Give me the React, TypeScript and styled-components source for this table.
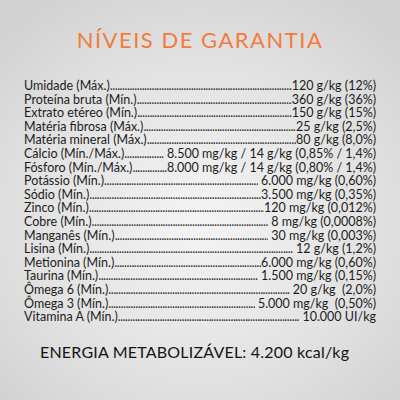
import React from 'react';
import styled, { createGlobalStyle } from 'styled-components';

const GlobalStyle = createGlobalStyle`
  html, body {
    margin: 0;
    padding: 0;
  }
  body {
    font-family: Lato, "Open Sans", sans-serif;
  }
`;

const Page = styled.div`
  width: 400px;
  height: 400px;
  box-sizing: border-box;
  padding: 25px 24px 0 24px;
  background: radial-gradient(ellipse 70% 65% at 50% 55%, #f4f4f4 0%, #e2e2e2 60%, #d2d2d2 100%);
  display: flex;
  flex-direction: column;
  overflow: hidden;
`;

const Title = styled.h1`
  margin: 0;
  text-align: center;
  color: #f47b3b;
  font-family: Lato, sans-serif;
  font-weight: 400;
  font-size: 22px;
  letter-spacing: 1.5px;
  line-height: 30px;
`;

const Table = styled.div`
  margin-top: 24px;
  display: flex;
  flex-direction: column;
`;

const Row = styled.div`
  display: flex;
  align-items: flex-start;
  height: 13.6px;
  font-size: 12.5px;
  line-height: 13.6px;
  color: #1c1c1c;
  white-space: nowrap;
`;

const Label = styled.span`
  flex: none;
`;

const Dots = styled.span`
  flex: 1;
  overflow: hidden;
  min-width: 0;
  letter-spacing: -0.5px;
  color: #333;
  &::after {
    content: '..........................................................................................................................................................................................';
  }
`;

const Value = styled.span`
  flex: none;
`;

const Energy = styled.div`
  margin-top: 18px;
  padding-left: 16px;
  font-size: 16px;
  color: #141414;
  letter-spacing: 0.2px;
  white-space: nowrap;
`;

const rows: [string, string][] = [
  ['Umidade (Máx.)', '120 g/kg (12%)'],
  ['Proteína bruta (Mín.)', '360 g/kg (36%)'],
  ['Extrato etéreo (Mín.)', '150 g/kg (15%)'],
  ['Matéria fibrosa (Máx.)', '25 g/kg (2,5%)'],
  ['Matéria mineral (Máx.)', '80 g/kg (8,0%)'],
  ['Cálcio (Mín./Máx.)', ' 8.500 mg/kg / 14 g/kg (0,85% / 1,4%)'],
  ['Fósforo (Mín./Máx.)', '8.000 mg/kg / 14 g/kg (0,80% / 1,4%)'],
  ['Potássio (Mín.)', ' 6.000 mg/kg (0,60%)'],
  ['Sódio (Mín.)', '3.500 mg/kg (0,35%)'],
  ['Zinco (Mín.)', '120 mg/kg (0,012%)'],
  ['Cobre (Mín.)', ' 8 mg/kg (0,0008%)'],
  ['Manganês (Mín.)', ' 30 mg/kg (0,003%)'],
  ['Lisina (Mín.)', ' 12 g/kg (1,2%)'],
  ['Metionina (Mín.)', '6.000 mg/kg (0,60%)'],
  ['Taurina (Mín.)', ' 1.500 mg/kg (0,15%)'],
  ['Ômega 6 (Mín.)', ' 20 g/kg  (2,0%)'],
  ['Ômega 3 (Mín.)', ' 5.000 mg/kg  (0,50%)'],
  ['Vitamina A (Mín.)', ' 10.000 UI/kg'],
];

export default function App() {
  return (
    <>
      <GlobalStyle />
      <Page>
        <Title>NÍVEIS DE GARANTIA</Title>
        <Table>
          {rows.map(([label, value]) => (
            <Row key={label}>
              <Label>{label}</Label>
              <Dots />
              <Value>{value.replace(/ /g, '\u00a0')}</Value>
            </Row>
          ))}
        </Table>
        <Energy>ENERGIA METABOLIZÁVEL: 4.200 kcal/kg</Energy>
      </Page>
    </>
  );
}
